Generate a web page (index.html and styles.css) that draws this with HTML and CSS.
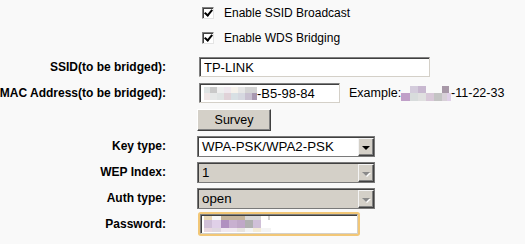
FILE: index.html
```html
<!DOCTYPE html>
<html lang="en">
<head>
    <meta charset="UTF-8">
    <title>Wireless Settings</title>
    <link rel="stylesheet" href="styles.css">
</head>
<body>

<div class="page">
    <!-- Checkbox options -->
    <div class="row check-row">
        <div class="label"></div>
        <div class="value"><span class="checkbox checked"></span>Enable SSID Broadcast</div>
    </div>
    <div class="row check-row">
        <div class="label"></div>
        <div class="value"><span class="checkbox checked"></span>Enable WDS Bridging</div>
    </div>
    <div class="spacer"></div>

    <!-- WDS fields -->
    <div class="row">
        <div class="label">SSID(to be bridged):</div>
        <div class="value"><input class="field ssid" type="text" value="TP-LINK"></div>
    </div>
    <div class="row">
        <div class="label">MAC Address(to be bridged):</div>
        <div class="value">
            <div class="field mac"><span class="blur mac-blur"></span>-B5-98-84</div>
            <span class="example">Example:<span class="blur example-blur"></span>-11-22-33</span>
        </div>
    </div>
    <div class="row survey-row">
        <div class="label"></div>
        <div class="value"><button class="btn">Survey</button></div>
    </div>
    <div class="row">
        <div class="label">Key type:</div>
        <div class="value">
            <div class="select"><span class="select-text">WPA-PSK/WPA2-PSK</span><span class="arrow"></span></div>
        </div>
    </div>
    <div class="row">
        <div class="label">WEP Index:</div>
        <div class="value">
            <div class="select disabled"><span class="select-text">1</span><span class="arrow"></span></div>
        </div>
    </div>
    <div class="row">
        <div class="label">Auth type:</div>
        <div class="value">
            <div class="select disabled"><span class="select-text">open</span><span class="arrow"></span></div>
        </div>
    </div>
    <div class="row">
        <div class="label">Password:</div>
        <div class="value">
            <div class="field password focused"><span class="blur pass-blur"></span></div>
        </div>
    </div>
</div>

</body>
</html>
```

FILE: styles.css
```css
body {
    margin: 0;
    padding: 0;
    background-color: #ffffff;
    font-family: "Liberation Sans", Arial, sans-serif;
    font-size: 12px;
    color: #000;
}
.page {
    background-color: #f9f9f9;
    height: 244px;
}
.row {
    display: flex;
    align-items: center;
    height: 26px;
}
.check-row {
    height: 25px;
}
.survey-row {
    height: 27px;
}
.spacer {
    height: 4px;
}
.label {
    flex: none;
    display: flex;
    justify-content: flex-end;
    width: 166px;
    margin-right: 31px;
    white-space: nowrap;
    font-weight: bold;
}
.value {
    display: flex;
    align-items: center;
    white-space: nowrap;
}
.checkbox {
    box-sizing: border-box;
    width: 12px;
    height: 12px;
    margin: 0 10px 0 5px;
    background-color: #fff;
    border: 1px solid;
    border-color: #808080 #e4e4e4 #e4e4e4 #808080;
    box-shadow: inset 1px 1px 0 #404040;
    position: relative;
}
.checkbox.checked::after {
    content: "";
    position: absolute;
    left: 3px;
    top: 0px;
    width: 3px;
    height: 6px;
    border: solid #000;
    border-width: 0 2px 2px 0;
    transform: rotate(40deg);
}
.field {
    box-sizing: border-box;
    height: 20px;
    margin-left: 2px;
    padding: 0 4px;
    background-color: #fff;
    border: 1px solid;
    border-color: #808080 #d4d0c8 #d4d0c8 #808080;
    box-shadow: inset 1px 1px 0 #404040;
    font-family: "Liberation Sans", Arial, sans-serif;
    font-size: 13px;
    color: #000;
    display: flex;
    align-items: center;
    outline: none;
}
.ssid {
    width: 231px;
}
.mac {
    width: 141px;
}
.example {
    display: flex;
    align-items: center;
    margin-left: 9px;
    font-size: 12.5px;
}
.blur {
    display: inline-block;
    flex: none;
}
.mac-blur {
    width: 53px;
    height: 13px;
    background:
        linear-gradient(to right, #dfe3e3 0 6px, #c9c9c9 6px 13px, #efefef 13px 20px, #efe8ee 20px 27px, #f6f2ec 27px 34px, #e6e6e6 34px 41px, #d4d4d4 41px 53px) top / 100% 6px no-repeat,
        linear-gradient(to right, #efe6e6 0 6px, #e6e8e8 6px 13px, #e0e4e4 13px 20px, #e0d2d8 20px 27px, #d8e0e4 27px 34px, #d6d8e0 34px 41px, #c8c0d0 41px 48px, #a898b0 48px 53px) bottom / 100% 7px no-repeat;
}
.example-blur {
    width: 50px;
    height: 15px;
    background:
        linear-gradient(to right, transparent 0 9px, #d4ccdc 9px 17px, #c8b8d0 17px 25px, transparent 25px 41px, #a898a8 41px 48px, transparent 48px) top / 100% 7px no-repeat,
        linear-gradient(to right, #c0a0c8 0 9px, #d8dcdc 9px 17px, #e0e0e0 17px 25px, #d8c8d8 25px 33px, #c4c4c4 33px 41px, #d8d0d8 41px 46px, #e0d0e8 46px 50px) bottom / 100% 8px no-repeat;
}
.btn {
    box-sizing: border-box;
    width: 74px;
    height: 22px;
    padding: 0;
    background-color: #d4d0c8;
    border: 1px solid;
    border-color: #ffffff #404040 #404040 #ffffff;
    box-shadow: inset -1px -1px 0 #808080;
    font-family: "Liberation Sans", Arial, sans-serif;
    font-size: 12.5px;
    color: #000;
}
.select {
    box-sizing: border-box;
    display: flex;
    width: 178px;
    height: 21px;
    background-color: #fff;
    border: 1px solid #7a7a7a;
    box-shadow: inset 1px 1px 0 #404040;
}
.select.disabled {
    background-color: #d4d0c8;
}
.select-text {
    flex: 1;
    padding-left: 4px;
    padding-top: 1px;
    font-size: 13.3px;
    line-height: 18px;
}
.arrow {
    box-sizing: border-box;
    width: 16px;
    margin: 1px 0 0 0;
    background-color: #d4d0c8;
    border: 1px solid;
    border-color: #f4f4f4 #404040 #404040 #f4f4f4;
    box-shadow: inset -1px -1px 0 #808080;
    position: relative;
}
.arrow::after {
    content: "";
    position: absolute;
    left: 3px;
    top: 7px;
    border-left: 4px solid transparent;
    border-right: 4px solid transparent;
    border-top: 4px solid #000;
}
.select.disabled .arrow::after {
    border-top-color: #8a8a8a;
    filter: drop-shadow(1px 1px 0 #fff);
}
.password {
    width: 158px;
    height: 20px;
    margin-left: 3px;
    padding-left: 3px;
}
.focused {
    border-radius: 1px;
    box-shadow: inset 1px 1px 0 #404040, 0 0 0 2px #f2c777;
}
.pass-blur {
    width: 67px;
    height: 16px;
    background:
        linear-gradient(to right, #e8d8b8 0 8px, #f8f8f8 8px 17px, #c4b49c 17px 41px, #d8d8d8 41px 57px, transparent 57px 64px, #d0d0d0 64px 66px, transparent 66px) top / 100% 4px no-repeat,
        linear-gradient(to right, #d0c0d8 0 8px, #e0d0e8 8px 17px, #b090c0 17px 25px, #c8b0d0 25px 33px, #c0a8c8 33px 41px, #b0b0b0 41px 49px, #d0c0d8 49px 57px, transparent 57px) 0 4px / 100% 8px no-repeat,
        linear-gradient(to right, #e8d8e0 0 8px, #e0d8e0 8px 17px, #f0e8f0 17px 33px, #e8e4e0 33px 41px, #f4f4f4 41px 49px, #f4ecd8 49px 57px, #f4f4f4 57px 67px) bottom / 100% 4px no-repeat;
}
```
